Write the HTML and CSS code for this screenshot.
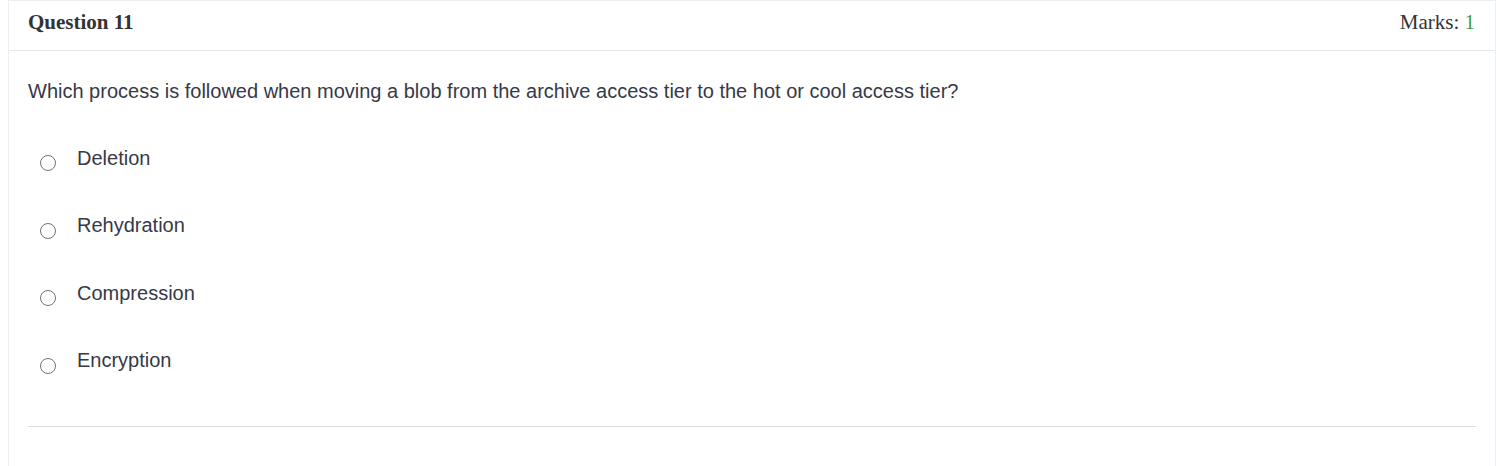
FILE: index.html
```html
<!DOCTYPE html>
<html>
<head>
<meta charset="utf-8">
<link rel="stylesheet" href="styles.css">
</head>
<body>
<div class="card">
  <div class="card-header">
    <span class="q-title">Question 11</span>
    <span class="marks">Marks: <span class="marks-val">1</span></span>
  </div>
  <div class="card-body">
    <p class="q-text">Which process is followed when moving a blob from the archive access tier to the hot or cool access tier?</p>
    <ul class="options">
      <li class="option"><span class="radio"></span><span class="opt-label">Deletion</span></li>
      <li class="option"><span class="radio"></span><span class="opt-label">Rehydration</span></li>
      <li class="option"><span class="radio"></span><span class="opt-label">Compression</span></li>
      <li class="option"><span class="radio"></span><span class="opt-label">Encryption</span></li>
    </ul>
    <hr class="divider">
  </div>
</div>
</body>
</html>
```

FILE: styles.css
```css
html, body {
  margin: 0;
  padding: 0;
  background: #fff;
}
body {
  padding: 0 0 0 8px;
}
.card {
  border: 1px solid #eceef1;
  border-bottom: none;
  min-height: 466px;
  box-sizing: border-box;
}
.card-header {
  display: flex;
  justify-content: space-between;
  align-items: flex-start;
  height: 50px;
  padding: 7px 20px 0 19px;
  box-sizing: border-box;
  border-bottom: 1px solid #e5e7eb;
  font-family: "Liberation Serif", "Times New Roman", serif;
  font-size: 21px;
  line-height: 28px;
  color: #333;
}
.q-title {
  font-weight: bold;
}
.marks-val {
  color: #3c9d3c;
}
.card-body {
  padding: 26px 19px 0 19px;
  font-family: "Liberation Sans", Arial, sans-serif;
  color: #363947;
}
.q-text {
  margin: 0;
  font-size: 20px;
  line-height: 28px;
}
.options {
  list-style: none;
  margin: 39px 0 0 0;
  padding: 0;
  display: flex;
  flex-direction: column;
  gap: 39.67px;
}
.option {
  display: flex;
  align-items: center;
  height: 28px;
  font-size: 20px;
}
.radio {
  width: 14px;
  height: 14px;
  border: 1.5px solid #727272;
  border-radius: 50%;
  margin: 10px 21px 0 12px;
  flex: none;
}
.divider {
  margin: 51px 0 0 0;
  border: none;
  border-top: 1px solid #dcdcdc;
}
```
